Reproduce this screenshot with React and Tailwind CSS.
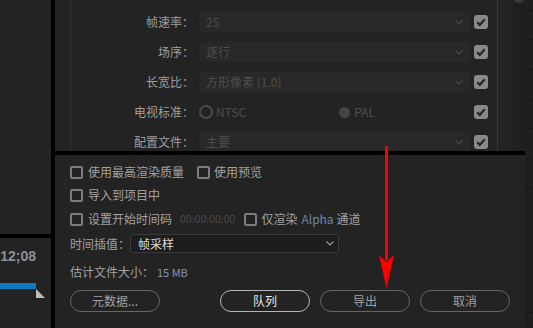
import React from "react";

const Chevron = ({ color = "#555" }) => (
  <svg width="8" height="5" viewBox="0 0 8 5" className="shrink-0">
    <path d="M0.5 0.5 L4 4 L7.5 0.5" fill="none" stroke={color} strokeWidth="1.2" />
  </svg>
);

const CheckOn = () => (
  <div className="w-[14px] h-[14px] rounded-[3px] bg-[#8a8a8a] flex items-center justify-center shrink-0">
    <svg width="14" height="14" viewBox="0 0 14 14">
      <path d="M3.2 7.2 L5.8 9.8 L10.8 4.2" fill="none" stroke="#262626" strokeWidth="2.2" />
    </svg>
  </div>
);

const CheckOff = () => (
  <div className="w-[13px] h-[13px] rounded-[2px] border-2 border-[#7c7c7c] shrink-0" />
);

const Select = ({ children }) => (
  <div className="ml-[5px] w-[271px] h-[20px] rounded-[3px] bg-[#282828] flex items-center justify-between pl-[7px] pr-[7px] text-[12px] text-[#4e4e4e]">
    <span>{children}</span>
    <Chevron color="#4a4a4a" />
  </div>
);

const Label = ({ children }) => (
  <div className="w-[123px] text-right text-[12px] text-[#9e9e9e] whitespace-nowrap">{children}</div>
);

const TopRow = ({ label, children }) => (
  <div className="h-[20px] flex items-center">
    <Label>{label}</Label>
    {children}
    <div className="ml-[4px]">
      <CheckOn />
    </div>
  </div>
);

const Btn = ({ children, primary }) => (
  <div
    className={
      "w-[90px] h-[22px] rounded-full border flex items-center justify-center text-[12px] " +
      (primary ? "border-[#b4b4b4] text-[#e8e8e8]" : "border-[#666666] text-[#a0a0a0]")
    }
  >
    {children}
  </div>
);

export default function App() {
  return (
    <div className="w-[533px] h-[328px] flex bg-[#232323] overflow-hidden relative font-['Noto_Sans_CJK_SC',sans-serif] leading-none">
      {/* left column */}
      <div className="w-[51px] flex flex-col shrink-0">
        <div className="h-[234px]" />
        <div className="h-[4px] bg-black" />
        <div className="flex-1 flex flex-col">
          <div className="mt-[11px] w-[36px] flex justify-end">
            <span className="font-['Liberation_Sans',sans-serif] font-bold text-[14px] leading-[14px] text-[#8d8e95] whitespace-nowrap">
              12;08
            </span>
          </div>
          <div className="mt-[20px] w-[36px] h-[6px] bg-[#0e78c0]" />
          <div className="ml-[36px] w-0 h-0 border-l-[9px] border-l-[#bdbdbd] border-t-[9px] border-t-transparent" />
        </div>
      </div>
      <div className="w-[4px] bg-black shrink-0" />

      {/* main column */}
      <div className="w-[470px] flex flex-col shrink-0">
        {/* top panel */}
        <div className="h-[151px] flex">
          <div className="w-[15px]" />
          <div className="w-[1px] bg-[#333333]" />
          <div className="w-[426px] flex flex-col pt-[12px] gap-[10px]">
            <TopRow label="帧速率：">
              <Select>25</Select>
            </TopRow>
            <TopRow label="场序：">
              <Select>逐行</Select>
            </TopRow>
            <TopRow label="长宽比：">
              <Select>方形像素 (1.0)</Select>
            </TopRow>
            <TopRow label="电视标准：">
              <div className="ml-[5px] w-[271px] h-[20px] flex items-center text-[12px] text-[#4e4e4e]">
                <div className="w-[14px] h-[14px] rounded-full border-2 border-[#4a4a4a]" />
                <span className="ml-[3px]">NTSC</span>
                <div className="ml-[93px] w-[11px] h-[11px] rounded-full bg-[#454545]" />
                <span className="ml-[4px]">PAL</span>
              </div>
            </TopRow>
            <TopRow label="配置文件：">
              <Select>主要</Select>
            </TopRow>
          </div>
          <div className="w-[1px] bg-[#393939]" />
          <div className="w-[15px]" />
          <div className="w-[12px] bg-[#1f1f1f] relative">
            <div className="absolute left-0 top-[-9px] w-[12px] h-[12px] rounded-full bg-[#3a3a3a]" />
          </div>
        </div>
        <div className="h-[4px] bg-black" />

        {/* bottom panel */}
        <div className="flex-1 flex flex-col pl-[15px] pt-[9px] text-[12px] text-[#a2a2a2]">
          <div className="h-[16px] flex items-center">
            <CheckOff />
            <span className="ml-[5px]">使用最高渲染质量</span>
            <div className="ml-[13px]">
              <CheckOff />
            </div>
            <span className="ml-[4px]">使用预览</span>
          </div>
          <div className="mt-[7px] h-[16px] flex items-center">
            <CheckOff />
            <span className="ml-[5px]">导入到项目中</span>
          </div>
          <div className="mt-[8px] h-[16px] flex items-center">
            <CheckOff />
            <span className="ml-[5px]">设置开始时间码</span>
            <span className="ml-[8px] text-[10.5px] text-[#4a4a4a]">00:00:00:00</span>
            <div className="ml-[9px]">
              <CheckOff />
            </div>
            <span className="ml-[4px]">仅渲染</span>
            <span className="ml-[4px] text-[#6a88aa]">Alpha</span>
            <span className="ml-[3px]">通道</span>
          </div>
          <div className="mt-[7px] h-[19px] flex items-center">
            <span className="w-[60px]">时间插值：</span>
            <div className="w-[209px] h-[19px] rounded-[3px] bg-[#1d1d1d] border border-[#3a3a3a] flex items-center justify-between pl-[7px] pr-[4px]">
              <span className="text-[#dcdcdc]">帧采样</span>
              <Chevron color="#9a9a9a" />
            </div>
          </div>
          <div className="mt-[11px] h-[16px] flex items-center">
            <span>估计文件大小：</span>
            <span className="ml-[3px] text-[11px] text-[#8796a8]">15 MB</span>
          </div>
          <div className="mt-[10px] h-[22px] flex items-center gap-[10px]">
            <Btn>元数据...</Btn>
            <div className="w-[40px]" />
            <Btn primary>队列</Btn>
            <Btn>导出</Btn>
            <Btn>取消</Btn>
          </div>
        </div>
      </div>

      {/* right ruler strip */}
      <div className="w-[8px] shrink-0 bg-[#1f1f1f]">
        <svg width="8" height="328" viewBox="0 0 8 328">
          {[10, 39, 69, 99, 128, 158, 188, 312].map((y) => (
            <rect key={y} x="0" y={y} width="8" height="1" fill="#141414" />
          ))}
        </svg>
      </div>

      {/* red arrow overlay */}
      <svg className="absolute left-0 top-0 pointer-events-none" width="533" height="328" viewBox="0 0 533 328">
        <rect x="385" y="146" width="3" height="114" fill="#ff0000" />
        <path d="M379 255 L386.5 262 L394 255 L386.5 288 Z" fill="#ff0000" />
      </svg>
    </div>
  );
}
